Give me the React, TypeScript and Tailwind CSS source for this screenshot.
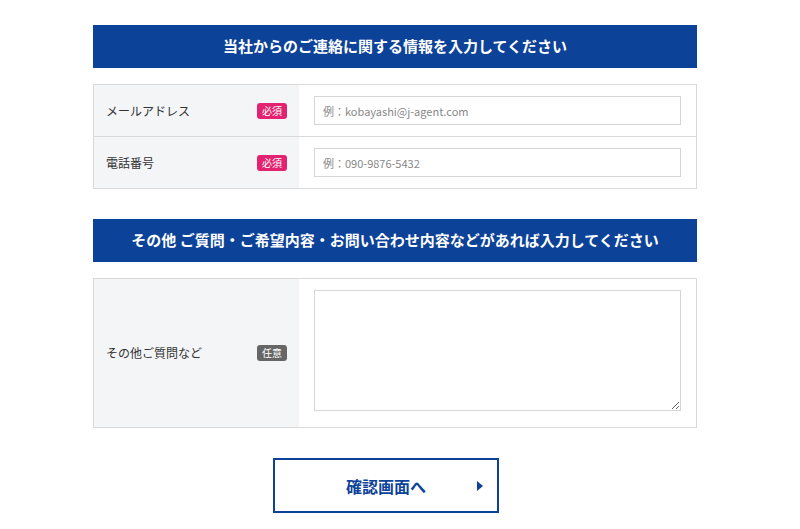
const font = { fontFamily: '"Noto Sans CJK JP", "Noto Sans", sans-serif' }

function Badge({ label, color }: { label: string; color: string }) {
  return (
    <span className={`${color} text-white text-[10px] leading-none rounded-[3px] px-[5px] py-[3px]`}>{label}</span>
  )
}

function Label({ text, badge }: { text: string; badge: React.ReactNode }) {
  return (
    <div className="w-[205px] shrink-0 bg-[#f4f5f7] flex items-center justify-between pl-3 pr-[12px] text-[12px] text-[#333]">
      <span>{text}</span>
      {badge}
    </div>
  )
}

export default function App() {
  return (
    <div className="min-h-screen bg-white pt-[25px]" style={font}>
      <div className="w-[604px] ml-[93px]">
        <div className="h-[43px] bg-[#0d4299] text-white font-bold text-[15px] flex items-center justify-center">
          当社からのご連絡に関する情報を入力してください
        </div>
        <div className="mt-[16px] border border-[#d9d9d9]">
          <div className="flex h-[52px] border-b border-[#d9d9d9]">
            <Label text="メールアドレス" badge={<Badge label="必須" color="bg-[#e3236f]" />} />
            <div className="flex-1 flex items-center px-[15px]">
              <input className="w-full h-[29px] border border-[#d5d5d5] px-2 text-[11px] outline-none placeholder:text-[#888]" placeholder="例：kobayashi@j-agent.com" />
            </div>
          </div>
          <div className="flex h-[51px]">
            <Label text="電話番号" badge={<Badge label="必須" color="bg-[#e3236f]" />} />
            <div className="flex-1 flex items-center px-[15px]">
              <input className="w-full h-[29px] border border-[#d5d5d5] px-2 text-[11px] outline-none placeholder:text-[#888]" placeholder="例：090-9876-5432" />
            </div>
          </div>
        </div>

        <div className="mt-[30px] h-[43px] bg-[#0d4299] text-white font-bold text-[15px] flex items-center justify-center">
          その他 ご質問・ご希望内容・お問い合わせ内容などがあれば入力してください
        </div>
        <div className="mt-[16px] border border-[#d9d9d9] flex h-[150px]">
          <Label text="その他ご質問など" badge={<Badge label="任意" color="bg-[#666]" />} />
          <div className="flex-1 px-[15px] pt-[11px]">
            <textarea className="w-full h-[121px] border border-[#d5d5d5] outline-none block" />
          </div>
        </div>

        <div className="flex justify-center mt-[30px]">
          <button className="w-[226px] h-[55px] border-2 border-[#0d4299] bg-white relative flex items-center justify-center text-[#0d4299] font-bold text-[16px] ml-[-18px]">
            確認画面へ
            <span className="absolute right-[14px] top-1/2 -translate-y-1/2 w-0 h-0 border-y-[5px] border-y-transparent border-l-[6px] border-l-[#0d4299]" />
          </button>
        </div>
      </div>
    </div>
  )
}
